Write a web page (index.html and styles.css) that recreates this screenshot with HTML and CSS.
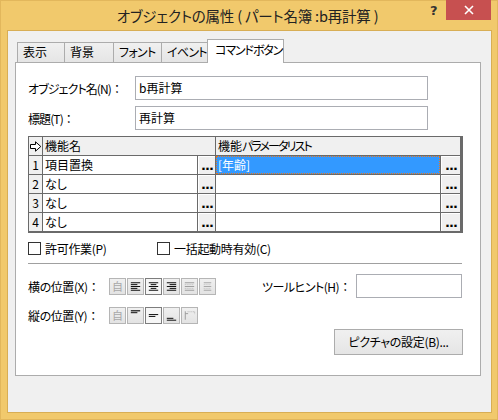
FILE: index.html
```html
<!DOCTYPE html>
<html lang="ja">
<head>
<meta charset="utf-8">
<title>オブジェクトの属性</title>
<link rel="stylesheet" href="styles.css">
</head>
<body>
<div class="window">
  <div class="titlebar">
    <div class="title">オブジェクトの属性 ( パート名簿 :b再計算 )</div>
    <div class="help">?</div>
    <div class="close">
      <svg width="10" height="10" viewBox="0 0 10 10"><path d="M1 1L9 9M9 1L1 9" stroke="#fff" stroke-width="1.6" fill="none"/></svg>
    </div>
  </div>
  <div class="client">
    <div class="tabs">
      <div class="tab w1">表示</div>
      <div class="tab w2">背景</div>
      <div class="tab w3">フォント</div>
      <div class="tab w4">イベント</div>
      <div class="tab active w5">コマンドボタン</div>
    </div>
    <div class="panel">
      <div class="field-row">
        <div class="field-label">オブジェクト名(N)<span class="colon">：</span></div>
        <div class="textbox">b再計算</div>
      </div>
      <div class="field-row gap6">
        <div class="field-label">標題(T)<span class="colon">：</span></div>
        <div class="textbox">再計算</div>
      </div>
      <div class="grid">
        <div class="cell head corner">
          <svg width="12" height="11" viewBox="0 0 12 11"><path d="M0.5 3.5H5.5V0.8L10.8 5.5L5.5 10.2V7.5H0.5Z" fill="#fff" stroke="#000" stroke-width="1"/></svg>
        </div>
        <div class="cell head span2">機能名</div>
        <div class="cell head span2">機能<span class="kana">パラメータリスト</span></div>

        <div class="cell rowhead">1</div>
        <div class="cell">項目置換</div>
        <div class="cell btn">...</div>
        <div class="cell selected">[年齢]</div>
        <div class="cell btn">...</div>

        <div class="cell rowhead">2</div>
        <div class="cell">なし</div>
        <div class="cell btn">...</div>
        <div class="cell"></div>
        <div class="cell btn">...</div>

        <div class="cell rowhead">3</div>
        <div class="cell">なし</div>
        <div class="cell btn">...</div>
        <div class="cell"></div>
        <div class="cell btn">...</div>

        <div class="cell rowhead">4</div>
        <div class="cell">なし</div>
        <div class="cell btn">...</div>
        <div class="cell"></div>
        <div class="cell btn">...</div>
      </div>
      <div class="checks">
        <div class="check first"><span class="box"></span><span>許可作業(P)</span></div>
        <div class="check"><span class="box"></span><span>一括起動時有効(C)</span></div>
      </div>
      <div class="separator"></div>
      <div class="align-row">
        <div class="align-label">横の位置(X)<span class="colon">：</span></div>
        <div class="tools">
          <div class="tool"><span class="auto">自</span></div>
          <div class="tool">
            <svg width="16" height="15" viewBox="0 0 16 15"><path d="M3 3.5H13M3 5.5H10M3 7.5H13M3 9.5H10M3 11.5H13" stroke="#000"/></svg>
          </div>
          <div class="tool pressed">
            <svg width="16" height="15" viewBox="0 0 16 15"><path d="M3 3.5H13M5 5.5H11M3 7.5H13M5 9.5H11M3 11.5H13" stroke="#000"/></svg>
          </div>
          <div class="tool">
            <svg width="16" height="15" viewBox="0 0 16 15"><path d="M3 3.5H13M6 5.5H13M3 7.5H13M6 9.5H13M3 11.5H13" stroke="#000"/></svg>
          </div>
          <div class="tool">
            <svg width="16" height="15" viewBox="0 0 16 15"><path d="M3 3.5H13M3 7.5H13M3 11.5H13" stroke="#9a9a9a"/><path d="M3 5.5H13M3 9.5H13" stroke="#b4b4b4" stroke-dasharray="1 1"/></svg>
          </div>
          <div class="tool">
            <svg width="16" height="15" viewBox="0 0 16 15"><path d="M4 3.5H12M4 7.5H12M4 11.5H12" stroke="#a4a4a4"/><path d="M4 5.5H12M4 9.5H12" stroke="#bcbcbc" stroke-dasharray="1 1"/></svg>
          </div>
        </div>
        <div class="tip-label">ツールヒント(H)<span class="colon">：</span></div>
        <div class="textbox tip"></div>
      </div>
      <div class="align-row second">
        <div class="align-label">縦の位置(Y)<span class="colon">：</span></div>
        <div class="tools">
          <div class="tool"><span class="auto">自</span></div>
          <div class="tool">
            <svg width="16" height="15" viewBox="0 0 16 15"><path d="M3 2.5H13" stroke="#000" stroke-width="1.2"/><path d="M3 4.5H10" stroke="#000"/></svg>
          </div>
          <div class="tool pressed">
            <svg width="16" height="15" viewBox="0 0 16 15"><path d="M3 6.5H13M3 8.5H10" stroke="#000"/></svg>
          </div>
          <div class="tool">
            <svg width="16" height="15" viewBox="0 0 16 15"><path d="M3 10.5H10M3 12.5H13" stroke="#000"/></svg>
          </div>
          <div class="tool">
            <svg width="16" height="15" viewBox="0 0 16 15"><path d="M3.5 3V12M3.5 5.5H6.5" stroke="#9a9a9a"/><path d="M6 3.5H14M13.5 3.5V6" stroke="#b0b0b0" stroke-dasharray="1 1"/></svg>
          </div>
        </div>
      </div>
      <div class="actions">
        <div class="button">ピクチャの設定(B)...</div>
      </div>
    </div>
  </div>
</div>
</body>
</html>
```
FILE: styles.css
```css
* { box-sizing: border-box; }
html, body { margin: 0; padding: 0; }
body {
  width: 498px;
  height: 420px;
  overflow: hidden;
  background: #F1C96C;
  font-family: "Noto Sans CJK JP", "Noto Sans", sans-serif;
  font-size: 12px;
  color: #000;
  font-feature-settings: "palt" 1;
}
.window {
  width: 498px;
  height: 420px;
  background: #F1C96C;
  box-shadow: inset 0 0 0 1px #E2B75C;
}
.titlebar {
  position: relative;
  height: 30px;
}
.title {
  text-align: center;
  font-size: 14.5px;
  line-height: 32px;
  color: #222;
  padding-right: 3px;
  letter-spacing: -0.2px;
}
.help {
  position: absolute;
  left: 430px;
  top: 3px;
  font-size: 13px;
  font-weight: bold;
  color: #333;
  font-family: "DejaVu Sans", sans-serif;
}
.close {
  position: absolute;
  left: 446px;
  top: 0;
  width: 45px;
  height: 20px;
  background: #C75050;
  display: flex;
  align-items: center;
  justify-content: center;
}
.client {
  margin-left: 7px;
  width: 485px;
  height: 383px;
  background: #F0F0F0;
  border: 1px solid #D8AE55;
}
.tabs {
  position: relative;
  z-index: 1;
  display: flex;
  align-items: flex-end;
  height: 23px;
  margin-top: 8px;
  margin-left: 9px;
}
.tab {
  height: 20px;
  border: 1px solid #ACACAC;
  border-bottom: none;
  background: linear-gradient(#F0F0F0, #E5E5E5);
  padding-left: 5px;
  line-height: 18px;
  margin-left: -1px;
  white-space: nowrap;
  letter-spacing: -0.7px;
}
.tab.w1 { width: 48px; margin-left: 0; letter-spacing: 0; }
.tab.w2 { width: 50px; letter-spacing: 0; }
.tab.w3 { width: 49px; }
.tab.w4 { width: 47px; }
.tab.w5 { width: 77px; }
.tab.active {
  height: 24px;
  margin-bottom: -1px;
  background: #fff;
  padding-left: 7px;
  line-height: 20px;
  letter-spacing: -1.1px;
}
.panel {
  margin-left: 7px;
  width: 466px;
  height: 314px;
  background: #fff;
  border: 1px solid #ACACAC;
  padding: 13px 0 0 12px;
}
.field-row {
  display: flex;
  align-items: center;
  height: 24px;
}
.gap6 { margin-top: 6px; }
.field-label {
  width: 107px;
  white-space: nowrap;
  letter-spacing: -0.9px;
}
.colon {
  font-feature-settings: normal;
  letter-spacing: 0;
}
.textbox {
  width: 293px;
  height: 24px;
  border: 1px solid #ABADB3;
  background: #fff;
  padding-left: 3px;
  line-height: 21px;
}
.grid {
  margin-top: 6px;
  display: grid;
  grid-template-columns: 13px 154px 17px 224px 19px;
  grid-template-rows: repeat(5, 18px);
  gap: 1px;
  width: 435px;
  background: #6A6A6A;
  border: 1px solid #6A6A6A;
  border-right-width: 2px;
  border-bottom-width: 2px;
}
.cell {
  background: #fff;
  line-height: 18px;
  padding-left: 2px;
  white-space: nowrap;
  overflow: hidden;
}
.cell.head { background: #F0F0F0; }
.kana { letter-spacing: -1.9px; }
.cell.span2 { grid-column: span 2; }
.cell.corner {
  padding: 0;
  display: flex;
  align-items: center;
  justify-content: center;
}
.cell.rowhead {
  background: #F0F0F0;
  padding: 0;
  text-align: center;
}
.cell.btn {
  background: #F0F0F0;
  padding: 0 0 0 1px;
  text-align: center;
  font-weight: bold;
  font-family: "DejaVu Sans", sans-serif;
  font-size: 13px;
  letter-spacing: -1px;
  line-height: 20px;
  box-shadow: inset 1px 1px 0 #fff;
}
.cell.selected {
  background: #3399FF;
  color: #fff;
  border: 1px dotted #E8781E;
  padding-left: 1px;
  line-height: 16px;
}
.checks {
  display: flex;
  align-items: center;
  height: 13px;
  margin-top: 9px;
}
.check {
  display: flex;
  align-items: center;
  gap: 4px;
  white-space: nowrap;
  letter-spacing: -0.3px;
}
.check.first { width: 129px; }
.box {
  width: 13px;
  height: 13px;
  border: 1px solid #333;
  background: #fff;
}
.separator {
  margin-top: 8px;
  width: 434px;
  height: 1px;
  background: #A0A0A0;
}
.align-row {
  display: flex;
  align-items: center;
  height: 24px;
  margin-top: 10px;
}
.align-row.second {
  height: 17px;
  margin-top: 9px;
}
.align-label { width: 81px; white-space: nowrap; letter-spacing: -0.4px; }
.tools { display: flex; }
.tool {
  width: 17px;
  height: 17px;
  margin-right: 1px;
  border: 1px solid #B5B5B5;
  background: linear-gradient(#F0F0F0, #E3E3E3);
  display: flex;
  align-items: center;
  justify-content: center;
}
.tool.pressed {
  background: #F6F6F6;
  border-color: #7D7D7D;
}
.tool svg { display: block; }
.auto {
  color: #A8A8A8;
  font-size: 11px;
  line-height: 15px;
}
.tip-label {
  margin-left: 45px;
  width: 94px;
  white-space: nowrap;
  letter-spacing: -0.5px;
}
.textbox.tip { width: 106px; }
.actions {
  display: flex;
  justify-content: flex-end;
  width: 435px;
  margin-top: 5px;
}
.button {
  width: 129px;
  height: 26px;
  border: 1px solid #ACACAC;
  background: linear-gradient(#F0F0F0, #E5E5E5);
  text-align: center;
  line-height: 24px;
  letter-spacing: -0.3px;
}
```
